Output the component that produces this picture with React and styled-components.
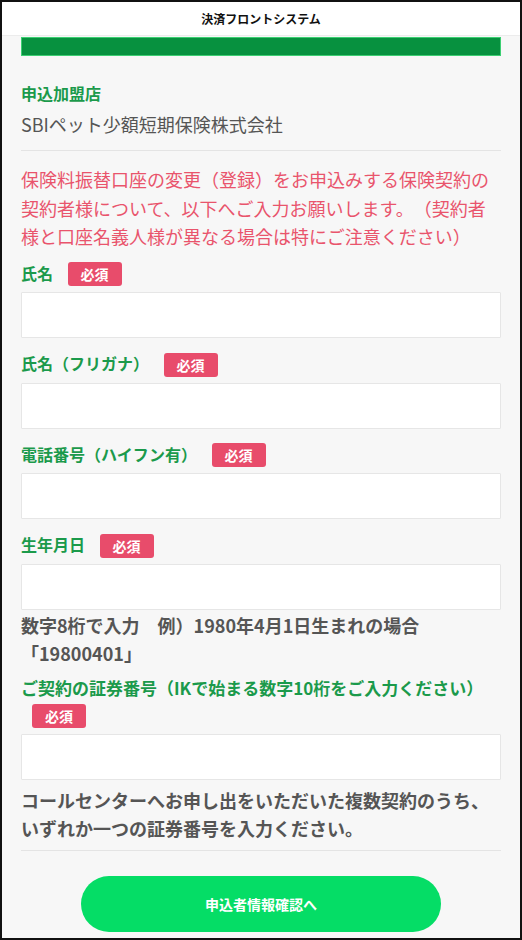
import React from "react";
import styled, { createGlobalStyle } from "styled-components";

const Global = createGlobalStyle`
  html, body { margin: 0; padding: 0; background: #ffffff; }
  body {
    font-family: "Noto Sans CJK JP", "Noto Sans", sans-serif;
    text-spacing-trim: space-all;
  }
  * { box-sizing: border-box; }
`;

const Frame = styled.div`
  width: 522px;
  height: 940px;
  border: 2px solid #111;
  overflow: hidden;
  display: flex;
  flex-direction: column;
  background: #f7f7f7;
`;

const Header = styled.header`
  height: 34px;
  background: #ffffff;
  border-bottom: 1px solid #ececec;
  display: flex;
  align-items: center;
  justify-content: center;
  font-size: 12px;
  font-weight: 700;
  color: #111;
  flex-shrink: 0;
`;

const Content = styled.main`
  padding: 1px 19px 0;
  display: flex;
  flex-direction: column;
`;

const Bar = styled.div`
  height: 19px;
  background: #07913f;
  border: 1px solid #3ccf72;
`;

const Label = styled.span`
  color: #1b9a4b;
  font-size: ${(p) => p.$size || 16}px;
  font-weight: 700;
`;

const ShopLabel = styled.div`
  margin-top: 26px;
  line-height: 22px;
  color: #1b9a4b;
  font-size: 16px;
  font-weight: 700;
`;

const ShopName = styled.div`
  margin-top: 6px;
  line-height: 28px;
  font-size: 18px;
  color: #555;
`;

const Divider = styled.hr`
  border: 0;
  border-top: 1px solid #e4e4e4;
  margin: ${(p) => p.$mt}px 0 0;
  height: 0;
`;

const Notice = styled.p`
  margin: 14px 0 0;
  color: #e9546c;
  font-size: 18px;
  line-height: 28.5px;
`;

const Field = styled.div`
  margin-top: ${(p) => p.$mt}px;
  display: flex;
  flex-direction: column;
`;

const LabelRow = styled.div`
  line-height: 26px;
`;

const Badge = styled.span`
  display: inline-block;
  vertical-align: middle;
  margin-left: 11px;
  height: 24px;
  line-height: 24px;
  padding: 0 13px;
  background: #e84c6b;
  color: #fff;
  font-size: 14px;
  font-weight: 700;
  border-radius: 3px;
  position: relative;
  top: -1px;
`;

const Input = styled.input`
  margin-top: 5px;
  height: 46px;
  width: 100%;
  background: #fff;
  border: 1px solid #e6e6e6;
  border-radius: 1px;
  outline: none;
  font-size: 16px;
`;

const Help = styled.p`
  margin: ${(p) => p.$mt}px 0 0;
  color: #555;
  font-size: 18px;
  font-weight: 700;
  line-height: 28px;
`;

const Button = styled.button`
  align-self: center;
  margin-top: 25px;
  width: 360px;
  height: 56px;
  border: 0;
  border-radius: 28px;
  background: #05dd66;
  color: #fff;
  font-family: inherit;
  font-size: 14px;
  font-weight: 700;
`;

const fields = [
  { label: "氏名", mt: 9 },
  { label: "氏名（フリガナ）", mt: 12 },
  { label: "電話番号（ハイフン有）", mt: 12 },
  { label: "生年月日", mt: 12 },
];

export default function App() {
  return (
    <>
      <Global />
      <Frame>
        <Header>決済フロントシステム</Header>
        <Content>
          <Bar />
          <ShopLabel>申込加盟店</ShopLabel>
          <ShopName>SBIペット少額短期保険株式会社</ShopName>
          <Divider $mt={12} />
          <Notice>
            保険料振替口座の変更（登録）をお申込みする保険契約の契約者様について、以下へご入力お願いします。（契約者様と口座名義人様が異なる場合は特にご注意ください）
          </Notice>
          {fields.map((f) => (
            <Field key={f.label} $mt={f.mt}>
              <LabelRow>
                <Label>{f.label}</Label> <Badge>必須</Badge>
              </LabelRow>
              <Input type="text" />
            </Field>
          ))}
          <Help $mt={1}>
            数字8桁で入力　例）1980年4月1日生まれの場合
            <br />
            「19800401」
          </Help>
          <Field $mt={8}>
            <LabelRow>
              <Label $size={17}>ご契約の証券番号（IKで始まる数字10桁をご入力ください）</Label>{" "}
              <Badge>必須</Badge>
            </LabelRow>
            <Input type="text" />
          </Field>
          <Help $mt={6}>
            コールセンターへお申し出をいただいた複数契約のうち、いずれか一つの証券番号を入力ください。
          </Help>
          <Divider $mt={8} />
          <Button type="button">申込者情報確認へ</Button>
        </Content>
      </Frame>
    </>
  );
}
